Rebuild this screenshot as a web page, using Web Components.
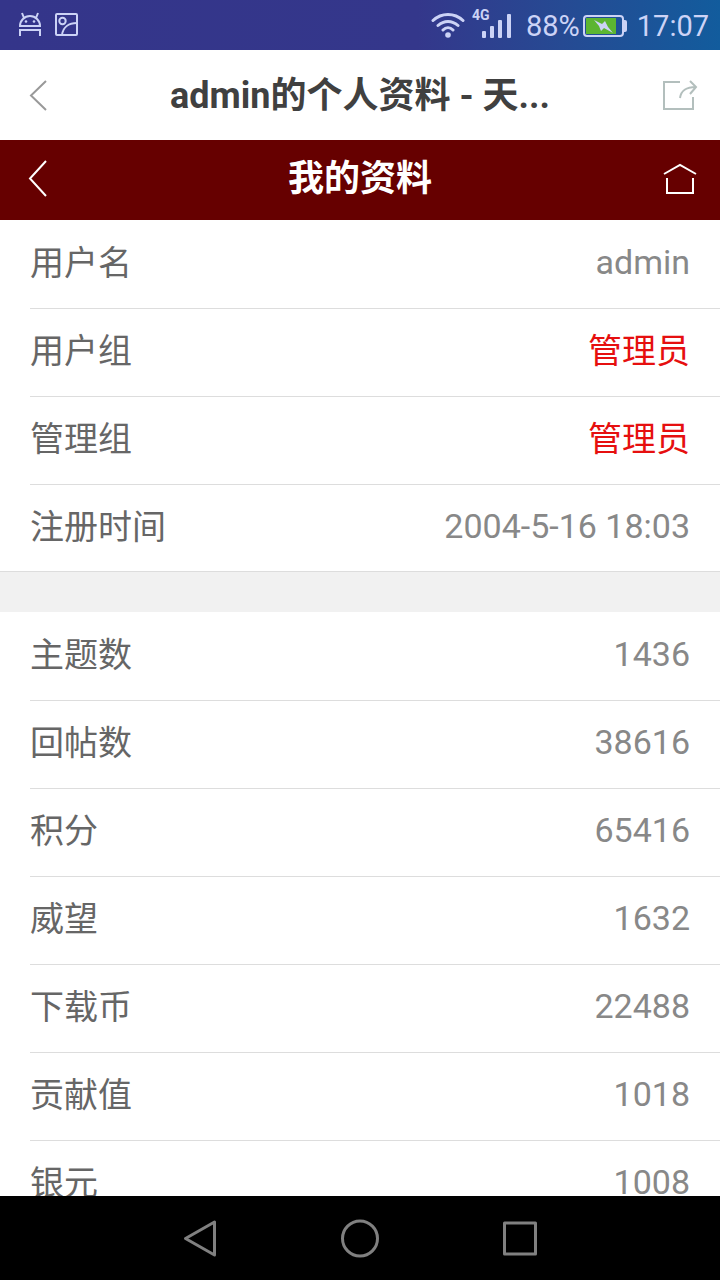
<!DOCTYPE html>
<html lang="zh-CN">
<head>
<meta charset="utf-8">
<meta name="viewport" content="width=device-width, initial-scale=1">
<title>admin的个人资料</title>
<style>
    body {
        margin: 0;
        background: #fff;
        font-family: Roboto, "Noto Sans CJK SC", sans-serif;
    }
</style>
</head>
<body>
<profile-app>
    <status-bar slot="top" network="4G" battery="88%" time="17:07"></status-bar>
    <title-bar slot="top">admin的个人资料 - 天...</title-bar>
    <page-header slot="top">我的资料</page-header>

    <profile-group>
        <profile-row label="用户名">admin</profile-row>
        <profile-row label="用户组" highlight>管理员</profile-row>
        <profile-row label="管理组" highlight>管理员</profile-row>
        <profile-row label="注册时间">2004-5-16 18:03</profile-row>
    </profile-group>
    <profile-group>
        <profile-row label="主题数">1436</profile-row>
        <profile-row label="回帖数">38616</profile-row>
        <profile-row label="积分">65416</profile-row>
        <profile-row label="威望">1632</profile-row>
        <profile-row label="下载币">22488</profile-row>
        <profile-row label="贡献值">1018</profile-row>
        <profile-row label="银元">1008</profile-row>
    </profile-group>

    <system-nav slot="bottom"></system-nav>
</profile-app>

<script>
class ProfileApp extends HTMLElement {
    connectedCallback() {
        this.attachShadow({ mode: 'open' });
        this.shadowRoot.innerHTML = `
            <style>
                :host {
                    display: flex;
                    flex-direction: column;
                    height: 100vh;
                }

                main {
                    flex: 1;
                    min-height: 0;
                    overflow-y: auto;
                    scrollbar-width: none;
                    display: flex;
                    flex-direction: column;
                    gap: 40px;
                    background: #f1f1f1;
                }
            </style>
            <slot name="top"></slot>
            <main><slot></slot></main>
            <slot name="bottom"></slot>
        `;
    }
}

class StatusBar extends HTMLElement {
    connectedCallback() {
        this.attachShadow({ mode: 'open' });
        this.shadowRoot.innerHTML = `
            <style>
                :host {
                    display: flex;
                    flex: none;
                    justify-content: space-between;
                    align-items: center;
                    box-sizing: border-box;
                    height: 50px;
                    padding: 2px 11px 0 16px;
                    background: linear-gradient(90deg, #34358a 0%, #34378b 58%, #264a93 78%, #125c9d 100%);
                    color: #ccd3f6;
                    font-size: 29px;
                    line-height: 48px;
                }

                .left, .right, .signal {
                    display: flex;
                    align-items: center;
                }

                .left {
                    gap: 8px;
                }

                .signal {
                    position: relative;
                    margin: 0 14px 0 17px;
                }

                .network {
                    position: absolute;
                    top: -5px;
                    left: -10px;
                    font-size: 14px;
                    font-weight: 700;
                    line-height: 16px;
                }

                .battery {
                    margin: 0 9px 0 2px;
                }

                svg {
                    display: block;
                }
            </style>
            <div class="left">
                <svg width="28" height="28" viewBox="0 0 28 28" fill="none" stroke="currentColor" stroke-width="2">
                    <path d="M4 14a10 10 0 0 1 20 0zM8 6 6 1M20 6l2-5M4 24v-6h20v6"/>
                    <circle cx="10" cy="9.500" r="1.300" fill="currentColor" stroke="none"/>
                    <circle cx="18" cy="9.500" r="1.300" fill="currentColor" stroke="none"/>
                </svg>
                <svg width="28" height="28" viewBox="0 0 28 28" fill="none" stroke="currentColor" stroke-width="2">
                    <rect x="4" y="2" width="21" height="21" rx="1"/>
                    <circle cx="10.500" cy="9" r="3.200"/>
                    <path d="M10 23c1-8 7-12 15-12"/>
                </svg>
            </div>
            <div class="right">
                <svg width="34" height="28" viewBox="0 0 34 28" fill="none" stroke="currentColor" stroke-width="3" stroke-linecap="round">
                    <path d="M2 8.500c8.500-8 21.500-8 30 0M7 13.500c6-5.500 14-5.500 20 0M12 18c3-3 7-3 10 0"/>
                    <circle cx="17" cy="23" r="2.800" fill="currentColor" stroke="none"/>
                </svg>
                <div class="signal">
                    <span class="network"></span>
                    <svg width="30" height="28" viewBox="0 0 30 28" fill="currentColor">
                        <rect x="0" y="19" width="4" height="7" rx="1"/>
                        <rect x="8" y="14" width="4" height="12" rx="1"/>
                        <rect x="16" y="8" width="4" height="18" rx="1"/>
                        <rect x="25" y="2" width="4" height="24" rx="1"/>
                    </svg>
                </div>
                <span class="percent"></span>
                <svg class="battery" width="46" height="24" viewBox="0 0 46 24">
                    <rect x="2" y="2" width="39" height="20" rx="3" fill="none" stroke="currentColor" stroke-width="2"/>
                    <path d="M42 6h1q2 0 2 2v8q0 2-2 2h-1z" fill="currentColor"/>
                    <rect x="4" y="4" width="30" height="16" fill="#5cb531"/>
                    <path d="m12 6 8 4 3-3 3 6 5 6-9-5-3 3-2-5z" fill="currentColor"/>
                </svg>
                <span class="time"></span>
            </div>
        `;
        this.shadowRoot.querySelector('.network').textContent = this.getAttribute('network');
        this.shadowRoot.querySelector('.percent').textContent = this.getAttribute('battery');
        this.shadowRoot.querySelector('.time').textContent = this.getAttribute('time');
    }
}

// Bar of the hosting app: close the page, or share it
class TitleBar extends HTMLElement {
    connectedCallback() {
        this.attachShadow({ mode: 'open' });
        this.shadowRoot.innerHTML = `
            <style>
                :host {
                    display: flex;
                    flex: none;
                    align-items: center;
                    height: 90px;
                    padding: 0 20px;
                    background: #fff;
                    color: #404040;
                }

                h1 {
                    flex: 1;
                    min-width: 0;
                    margin: 0;
                    padding-top: 2px;
                    font-size: 36px;
                    font-weight: 700;
                    line-height: 48px;
                    text-align: center;
                    white-space: nowrap;
                    overflow: hidden;
                    text-overflow: ellipsis;
                }

                button {
                    display: block;
                    padding: 0;
                    border: 0;
                    background: none;
                    color: #999;
                    cursor: pointer;
                }

                .share {
                    color: #b3bfbd;
                }

                svg {
                    display: block;
                }
            </style>
            <button type="button" aria-label="返回">
                <svg width="40" height="40" viewBox="0 0 40 40" fill="none" stroke="currentColor" stroke-width="2">
                    <path d="M26 6 11 20.500 26 35"/>
                </svg>
            </button>
            <h1><slot></slot></h1>
            <button class="share" type="button" aria-label="分享">
                <svg width="40" height="40" viewBox="0 0 40 40" fill="none" stroke="currentColor" stroke-width="2">
                    <path d="M20 7H4v27h29V22M20 23c1-7 5-11 16-11M30 6l6 6-6 7"/>
                </svg>
            </button>
        `;
    }
}

class PageHeader extends HTMLElement {
    connectedCallback() {
        this.attachShadow({ mode: 'open' });
        this.shadowRoot.innerHTML = `
            <style>
                :host {
                    display: flex;
                    flex: none;
                    align-items: center;
                    height: 80px;
                    padding: 0 20px;
                    background: #660000;
                    color: #fff;
                }

                h2 {
                    flex: 1;
                    margin: 0;
                    padding-bottom: 2px;
                    font-size: 36px;
                    font-weight: 700;
                    line-height: 48px;
                    text-align: center;
                }

                a {
                    color: inherit;
                }

                svg {
                    display: block;
                }
            </style>
            <a href="#back" aria-label="返回">
                <svg width="40" height="40" viewBox="0 0 40 40" fill="none" stroke="currentColor" stroke-width="2">
                    <path d="M26 1 10 18.500 26 36"/>
                </svg>
            </a>
            <h2><slot></slot></h2>
            <a href="#home" aria-label="首页">
                <svg width="40" height="40" viewBox="0 0 40 40" fill="none" stroke="currentColor" stroke-width="2">
                    <path d="M4 14 20 5l16 9M7 18v15h26V18"/>
                </svg>
            </a>
        `;
    }
}

class ProfileGroup extends HTMLElement {
    connectedCallback() {
        this.attachShadow({ mode: 'open' });
        this.shadowRoot.innerHTML = `
            <style>
                :host {
                    display: block;
                    flex: none;
                    background: #fff;
                    box-shadow: inset 0 -1px #ddd;
                }

                ::slotted(profile-row:not(:first-child)) {
                    box-shadow: inset 0 1px #ddd;
                }
            </style>
            <slot></slot>
        `;
    }
}

class ProfileRow extends HTMLElement {
    connectedCallback() {
        this.attachShadow({ mode: 'open' });
        this.shadowRoot.innerHTML = `
            <style>
                :host {
                    display: flex;
                    justify-content: space-between;
                    box-sizing: border-box;
                    height: 88px;
                    margin-left: 30px;
                    padding: 18px 30px 0 0;
                    font-size: 34px;
                    line-height: 48px;
                }

                .label {
                    color: #666;
                    line-height: 50px;
                }

                .value {
                    color: #888;
                }

                :host([highlight]) .value {
                    color: #e60f0f;
                    line-height: 50px;
                }
            </style>
            <span class="label"></span>
            <span class="value"><slot></slot></span>
        `;
        this.shadowRoot.querySelector('.label').textContent = this.getAttribute('label');
    }
}

class SystemNav extends HTMLElement {
    connectedCallback() {
        this.attachShadow({ mode: 'open' });
        this.shadowRoot.innerHTML = `
            <style>
                :host {
                    display: flex;
                    flex: none;
                    justify-content: center;
                    align-items: center;
                    gap: 112px;
                    height: 84px;
                    background: #000;
                }

                button {
                    padding: 0;
                    border: 0;
                    background: none;
                    color: #808080;
                    cursor: pointer;
                }

                svg {
                    display: block;
                }
            </style>
            <button type="button" aria-label="返回">
                <svg width="48" height="48" viewBox="0 0 48 48" fill="none" stroke="currentColor" stroke-width="3" stroke-linejoin="round">
                    <path d="M38.500 8v33L9.500 24.500z"/>
                </svg>
            </button>
            <button type="button" aria-label="主屏幕">
                <svg width="48" height="48" viewBox="0 0 48 48" fill="none" stroke="currentColor" stroke-width="3">
                    <circle cx="24" cy="24.500" r="17.500"/>
                </svg>
            </button>
            <button type="button" aria-label="最近任务">
                <svg width="48" height="48" viewBox="0 0 48 48" fill="none" stroke="currentColor" stroke-width="3" stroke-linejoin="round">
                    <rect x="8.500" y="9" width="31" height="31"/>
                </svg>
            </button>
        `;
    }
}

customElements.define('profile-app', ProfileApp);
customElements.define('status-bar', StatusBar);
customElements.define('title-bar', TitleBar);
customElements.define('page-header', PageHeader);
customElements.define('profile-group', ProfileGroup);
customElements.define('profile-row', ProfileRow);
customElements.define('system-nav', SystemNav);
</script>
</body>
</html>
